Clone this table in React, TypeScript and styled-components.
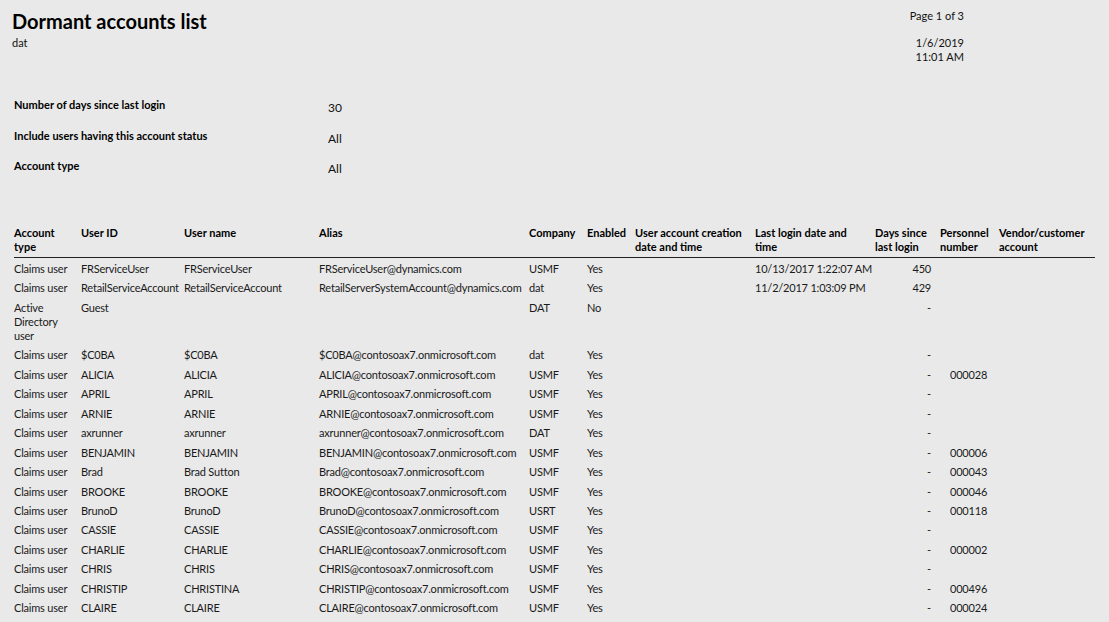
import React from "react";
import styled, { createGlobalStyle } from "styled-components";

const Global = createGlobalStyle`
  html, body { margin: 0; padding: 0; background: #e9e9e9; }
  body { font-family: "Segoe UI", Lato, "Open Sans", sans-serif; color: #111; }
`;

const Page = styled.div`
  width: 1109px;
  height: 622px;
  overflow: hidden;
  background: #e9e9e9;
  box-sizing: border-box;
  padding: 8px 0 0 12px;
`;

const Header = styled.header`
  display: flex;
  justify-content: space-between;
  padding-right: 145px;
`;

const TitleBlock = styled.div`
  display: flex;
  flex-direction: column;
`;

const Title = styled.h1`
  margin: 0;
  font-size: 20px;
  line-height: 26px;
  font-weight: 700;
  color: #000;
`;

const Company = styled.div`
  font-size: 11px;
  line-height: 14px;
  margin-top: 2px;
`;

const PageInfo = styled.div`
  display: flex;
  flex-direction: column;
  align-items: flex-end;
  font-size: 11px;
  line-height: 14px;
  padding-top: 1px;
`;

const DateBlock = styled.div`
  margin-top: 13px;
  text-align: right;
`;

const Params = styled.section`
  display: grid;
  grid-template-columns: 314px auto;
  row-gap: 11.5px;
  margin: 33px 0 0 2px;
`;

const ParamLabel = styled.div`
  font-size: 11px;
  font-weight: 700;
  line-height: 16px;
  color: #000;
`;

const ParamValue = styled.div`
  font-size: 12px;
  line-height: 16px;
  padding-top: 3px;
`;

const Table = styled.table`
  margin: 49px 0 0 2px;
  border-collapse: collapse;
  table-layout: fixed;
  width: 1081px;
  font-size: 11px;
`;

const Th = styled.th`
  text-align: left;
  vertical-align: top;
  font-weight: 700;
  line-height: 14px;
  padding: 0 4px 3px 0;
  border-bottom: 1px solid #222;
  color: #000;
`;

const Td = styled.td<{ $right?: boolean; $indent?: boolean; $wrap?: boolean; $first?: boolean }>`
  vertical-align: top;
  line-height: 14px;
  letter-spacing: -0.2px;
  padding: ${(p) => (p.$first ? "4px" : "3px")} ${(p) => (p.$right ? "9px" : "4px")} 2.46px
    ${(p) => (p.$indent ? "10px" : "0")};
  text-align: ${(p) => (p.$right ? "right" : "left")};
  white-space: ${(p) => (p.$wrap ? "normal" : "nowrap")};
  color: #1a1a1a;
`;

const widths = [67, 103, 135, 210, 58, 48, 120, 120, 65, 59, 96];

const headers = [
  "Account type",
  "User ID",
  "User name",
  "Alias",
  "Company",
  "Enabled",
  "User account creation date and time",
  "Last login date and time",
  "Days since last login",
  "Personnel number",
  "Vendor/customer account",
];

type Row = [string, string, string, string, string, string, string, string, string, string, string];

const cu = "Claims user";
const dom = "@contosoax7.onmicrosoft.com";
const u = (id: string, name: string, co: string, pn = ""): Row => [
  cu, id, name, id + dom, co, "Yes", "", "", "-", pn, "",
];

const rows: Row[] = [
  [cu, "FRServiceUser", "FRServiceUser", "FRServiceUser@dynamics.com", "USMF", "Yes", "", "10/13/2017 1:22:07 AM", "450", "", ""],
  [cu, "RetailServiceAccount", "RetailServiceAccount", "RetailServerSystemAccount@dynamics.com", "dat", "Yes", "", "11/2/2017 1:03:09 PM", "429", "", ""],
  ["Active Directory user", "Guest", "", "", "DAT", "No", "", "", "-", "", ""],
  u("$C0BA", "$C0BA", "dat"),
  u("ALICIA", "ALICIA", "USMF", "000028"),
  u("APRIL", "APRIL", "USMF"),
  u("ARNIE", "ARNIE", "USMF"),
  u("axrunner", "axrunner", "DAT"),
  u("BENJAMIN", "BENJAMIN", "USMF", "000006"),
  u("Brad", "Brad Sutton", "USMF", "000043"),
  u("BROOKE", "BROOKE", "USMF", "000046"),
  u("BrunoD", "BrunoD", "USRT", "000118"),
  u("CASSIE", "CASSIE", "USMF"),
  u("CHARLIE", "CHARLIE", "USMF", "000002"),
  u("CHRIS", "CHRIS", "USMF"),
  u("CHRISTIP", "CHRISTINA", "USMF", "000496"),
  u("CLAIRE", "CLAIRE", "USMF", "000024"),
];

export default function App() {
  return (
    <>
      <Global />
      <Page>
        <Header>
          <TitleBlock>
            <Title>Dormant accounts list</Title>
            <Company>dat</Company>
          </TitleBlock>
          <PageInfo>
            <div>Page 1 of 3</div>
            <DateBlock>
              <div>1/6/2019</div>
              <div>11:01 AM</div>
            </DateBlock>
          </PageInfo>
        </Header>
        <Params>
          <ParamLabel>Number of days since last login</ParamLabel>
          <ParamValue>30</ParamValue>
          <ParamLabel>Include users having this account status</ParamLabel>
          <ParamValue>All</ParamValue>
          <ParamLabel>Account type</ParamLabel>
          <ParamValue>All</ParamValue>
        </Params>
        <Table>
          <colgroup>
            {widths.map((w, i) => (
              <col key={i} style={{ width: w }} />
            ))}
          </colgroup>
          <thead>
            <tr>
              {headers.map((h) => (
                <Th key={h}>{h}</Th>
              ))}
            </tr>
          </thead>
          <tbody>
            {rows.map((r, ri) => (
              <tr key={ri}>
                {r.map((c, ci) => (
                  <Td
                    key={ci}
                    $first={ri === 0}
                    $right={ci === 8}
                    $indent={ci === 9}
                    $wrap={ci === 0}
                  >
                    {c}
                  </Td>
                ))}
              </tr>
            ))}
          </tbody>
        </Table>
      </Page>
    </>
  );
}
